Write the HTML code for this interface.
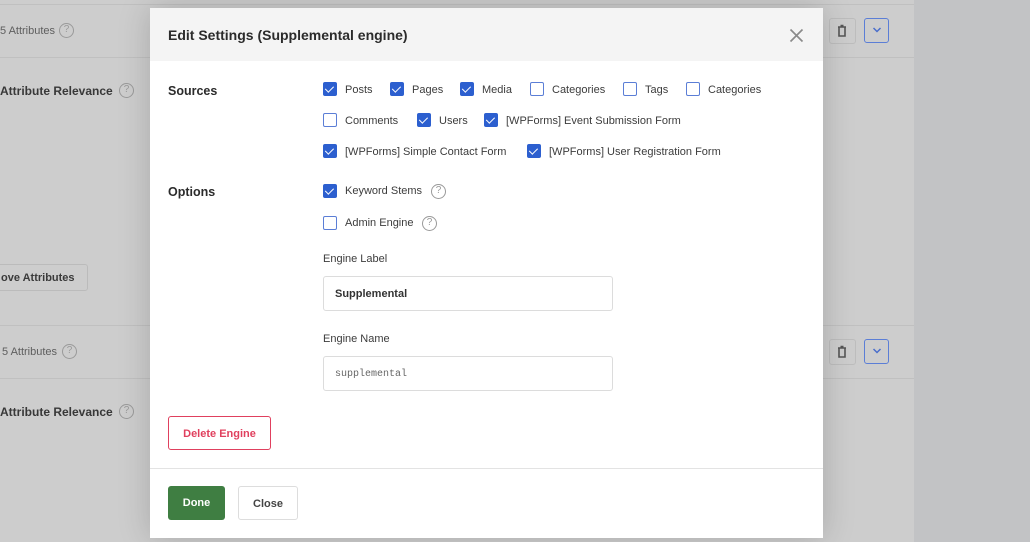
<!DOCTYPE html>
<html><head><style>
*{margin:0;padding:0;box-sizing:border-box}
body{width:1030px;height:542px;overflow:hidden;background:#cdcdcd;font-family:"Liberation Sans",sans-serif;position:relative}
.abs{position:absolute}
.right{left:914px;top:0;width:116px;height:542px;background:#c2c3c5}
.hl{height:1px;background:#c0c0c0;left:0;width:914px}
.gtxt{color:#5e5e5e;font-size:11px}
.gb{color:#383838;font-size:12px;font-weight:bold}
.q{display:inline-block;width:15px;height:15px;border:1.5px solid #9a9a9a;border-radius:50%;color:#9a9a9a;font-size:10px;text-align:center;line-height:12px;font-weight:normal}
.modal{left:150px;top:8px;width:673px;height:530px;background:#fff;box-shadow:0 0 30px rgba(0,0,0,.18)}
.head{height:53px;background:#f4f4f4;padding:19px 18px;font-size:14px;font-weight:bold;color:#2b2b2b}
.cb{position:absolute;width:14px;height:14px;border-radius:2px}
.cb.on{background:#2c5fcf}
.cb.on:after{content:"";position:absolute;left:4px;top:1.5px;width:3.5px;height:7px;border:solid #fff;border-width:0 1.8px 1.8px 0;transform:rotate(45deg)}
.cb.off{border:1.5px solid #5b7ed6;background:#fff}
.lab{position:absolute;font-size:11px;color:#3c3c3c}
.sec{position:absolute;font-size:12.5px;font-weight:bold;color:#2b2b2b}
.inp{position:absolute;left:173px;width:290px;height:35px;border:1px solid #dcdcdc;border-radius:3px}
</style></head><body>
<div class="abs right"></div>
<div class="abs hl" style="top:4px"></div>
<div class="abs hl" style="top:57px"></div>
<div class="abs hl" style="top:325px"></div>
<div class="abs hl" style="top:378px"></div>
<div class="abs gtxt" style="left:0;top:25px">5 Attributes</div><span class="abs q" style="left:59px;top:23px">?</span>
<div class="abs gb" style="left:0;top:84px">Attribute Relevance</div><span class="abs q" style="left:119px;top:83px">?</span>
<div class="abs" style="left:-4px;top:264px;width:92px;height:27px;border:1px solid #bbb;border-radius:3px;font-size:11px;font-weight:bold;color:#3a3a3a;padding:7px 0 0 4px">ove Attributes</div>
<div class="abs gtxt" style="left:2px;top:346px">5 Attributes</div><span class="abs q" style="left:62px;top:344px">?</span>
<div class="abs gb" style="left:0;top:405px">Attribute Relevance</div><span class="abs q" style="left:119px;top:404px">?</span>
<div class="abs" style="left:829px;top:18px;width:27px;height:26px;border:1px solid #bdbdbd;border-radius:3px"></div>
<svg class="abs" style="left:836px;top:24px" width="12" height="14"><path d="M2 3h8M4.5 1.5h3M3 3.5v8.5h6V3.5" fill="none" stroke="#555" stroke-width="1.6"/></svg>
<div class="abs" style="left:864px;top:18px;width:25px;height:25px;border:1.5px solid #5b7ed6;border-radius:3px"></div>
<svg class="abs" style="left:871px;top:26px" width="12" height="8"><path d="M2.5 2l3.5 3.5 3.5-3.5" fill="none" stroke="#4a6ecb" stroke-width="1.5"/></svg>
<div class="abs" style="left:829px;top:339px;width:27px;height:26px;border:1px solid #bdbdbd;border-radius:3px"></div>
<svg class="abs" style="left:836px;top:345px" width="12" height="14"><path d="M2 3h8M4.5 1.5h3M3 3.5v8.5h6V3.5" fill="none" stroke="#555" stroke-width="1.6"/></svg>
<div class="abs" style="left:864px;top:339px;width:25px;height:25px;border:1.5px solid #5b7ed6;border-radius:3px"></div>
<svg class="abs" style="left:871px;top:347px" width="12" height="8"><path d="M2.5 2l3.5 3.5 3.5-3.5" fill="none" stroke="#4a6ecb" stroke-width="1.5"/></svg>

<div class="abs modal">
<div class="head">Edit Settings (Supplemental engine)</div>
<svg class="abs" style="left:639px;top:20px" width="15" height="15"><path d="M1.5 1.5l12 12M13.5 1.5l-12 12" stroke="#8a8a8a" stroke-width="1.7"/></svg>
<div class="sec" style="left:18px;top:76px">Sources</div>
<div class="sec" style="left:18px;top:177px">Options</div>

<div class="cb on" style="left:173px;top:74px"></div><div class="lab" style="left:195px;top:76px">Posts</div>
<div class="cb on" style="left:240px;top:74px"></div><div class="lab" style="left:262px;top:76px">Pages</div>
<div class="cb on" style="left:310px;top:74px"></div><div class="lab" style="left:332px;top:76px">Media</div>
<div class="cb off" style="left:380px;top:74px"></div><div class="lab" style="left:402px;top:76px">Categories</div>
<div class="cb off" style="left:473px;top:74px"></div><div class="lab" style="left:495px;top:76px">Tags</div>
<div class="cb off" style="left:536px;top:74px"></div><div class="lab" style="left:558px;top:76px">Categories</div>

<div class="cb off" style="left:173px;top:105px"></div><div class="lab" style="left:195px;top:107px">Comments</div>
<div class="cb on" style="left:267px;top:105px"></div><div class="lab" style="left:289px;top:107px">Users</div>
<div class="cb on" style="left:334px;top:105px"></div><div class="lab" style="left:356px;top:107px">[WPForms] Event Submission Form</div>

<div class="cb on" style="left:173px;top:136px"></div><div class="lab" style="left:195px;top:138px">[WPForms] Simple Contact Form</div>
<div class="cb on" style="left:377px;top:136px"></div><div class="lab" style="left:399px;top:138px">[WPForms] User Registration Form</div>

<div class="cb on" style="left:173px;top:176px"></div><div class="lab" style="left:195px;top:177px">Keyword Stems</div><span class="abs q" style="left:281px;top:176px">?</span>
<div class="cb off" style="left:173px;top:208px"></div><div class="lab" style="left:195px;top:209px">Admin Engine</div><span class="abs q" style="left:272px;top:208px">?</span>

<div class="lab" style="left:173px;top:245px">Engine Label</div>
<div class="inp" style="top:268px;padding:11px 11px;font-size:11px;font-weight:bold;color:#333">Supplemental</div>
<div class="lab" style="left:173px;top:325px">Engine Name</div>
<div class="inp" style="top:348px;padding:12px 11px;font-size:10px;font-family:'Liberation Mono',monospace;color:#666">supplemental</div>

<div class="abs" style="left:18px;top:408px;width:103px;height:34px;border:1px solid #e0405e;border-radius:3px;color:#e0405e;font-size:11px;font-weight:bold;text-align:center;line-height:34px">Delete Engine</div>
<div class="abs" style="left:0;top:460px;width:673px;height:1px;background:#e3e3e3"></div>
<div class="abs" style="left:18px;top:478px;width:57px;height:34px;background:#3f7e42;border-radius:3px;color:#fff;font-size:11px;font-weight:bold;text-align:center;line-height:35px">Done</div>
<div class="abs" style="left:88px;top:478px;width:60px;height:34px;border:1px solid #ddd;border-radius:3px;color:#444;font-size:11px;font-weight:bold;text-align:center;line-height:34px">Close</div>
</div>
</body></html>
